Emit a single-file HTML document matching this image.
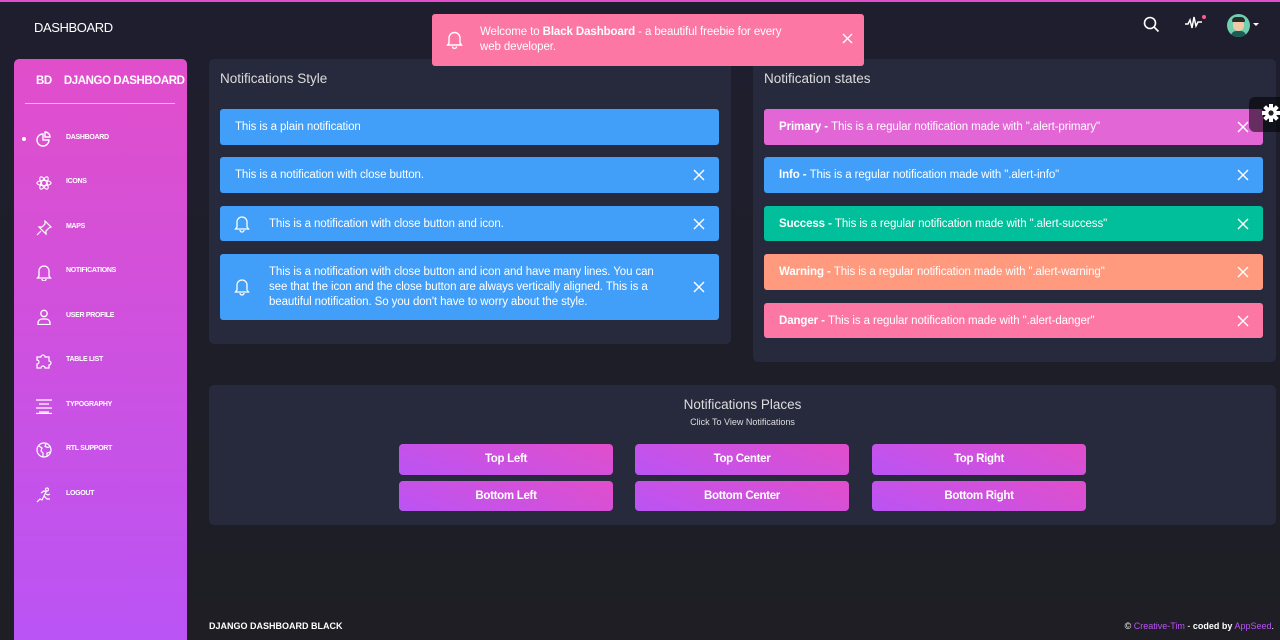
<!DOCTYPE html>
<html><head><meta charset="utf-8"><style>
*{box-sizing:border-box;margin:0;padding:0}
body{width:1280px;height:640px;overflow:hidden;background:linear-gradient(#1e1e2f,#1e1e24);font-family:"Liberation Sans",sans-serif;color:#fff;position:relative}
.topline{position:absolute;left:0;top:0;width:1280px;height:2px;background:#e14eca}
.abs{position:absolute}
.brand{left:34px;top:20px;font-size:13px;letter-spacing:-0.4px}
.side{left:14px;top:59px;width:173px;height:581px;border-radius:5px 5px 0 0;background:linear-gradient(180deg,#e14eca,#ba54f5)}
.side .logo{position:absolute;top:16px;left:22px;font-size:11.5px;font-weight:bold;letter-spacing:-0.4px;white-space:nowrap}
.side .logo span{margin-left:12px}
.side hr{position:absolute;top:44px;left:11px;width:150px;border:0;border-top:1px solid rgba(255,255,255,.6)}
.nav{position:absolute;left:22px;font-size:7px;font-weight:bold;letter-spacing:-0.3px;color:#fff}
.nav svg{position:absolute;left:0;top:-7px}
.nav b{position:absolute;left:30px;top:-4px;white-space:nowrap}
.card{background:#27293d;border-radius:5px}
.title{font-size:13.5px;color:#ddd;position:absolute;left:11px;top:12px}
.al{position:absolute;left:11px;width:499px;border-radius:3px;font-size:11.5px;color:#fff;display:flex;align-items:center;padding-left:15px;letter-spacing:-0.1px}
.al .x{position:absolute;right:14px;top:50%;margin-top:-6px}
.info{background:#419ef9}
.bell{position:absolute;left:14px;top:50%;margin-top:-9px}
.btn{position:absolute;width:214px;height:31px;border-radius:4px;background:linear-gradient(200deg,#e14eca,#ba54f5);font-size:11.5px;font-weight:bold;text-align:center;line-height:31px;letter-spacing:-0.3px}
</style></head><body>
<div class="topline"></div>
<div class="abs brand">DASHBOARD</div>

<svg class="abs" style="left:1143px;top:16px" width="17" height="17" viewBox="0 0 17 17" fill="none" stroke="#fff" stroke-width="1.6"><circle cx="7" cy="7" r="5.5"/><path d="M11 11l4.5 4.5"/></svg>
<svg class="abs" style="left:1185px;top:15px" width="20" height="15" viewBox="0 0 20 15" fill="none" stroke="#fff" stroke-width="1.5"><path d="M0 9h3l2-4 2 8 2-11 2 9 2-4h4"/></svg>
<div class="abs" style="left:1202px;top:15px;width:4px;height:4px;border-radius:50%;background:#fd5d93"></div>
<div class="abs" style="left:1227px;top:14px;width:23px;height:23px;border-radius:50%;background:#6fcfae;overflow:hidden"><div style="position:absolute;left:6px;top:5px;width:11px;height:12px;border-radius:5px;background:#f1c9a5"></div><div style="position:absolute;left:5px;top:3px;width:13px;height:5px;border-radius:4px 4px 1px 1px;background:#2b2b2b"></div><div style="position:absolute;left:4px;top:17px;width:15px;height:8px;border-radius:5px 5px 0 0;background:#1e5d55"></div></div>
<div class="abs" style="left:1253px;top:23px;border:3px solid transparent;border-top:3px solid #fff"></div>

<div class="abs" style="left:432px;top:14px;width:432px;height:52px;background:#fd77a4;border-radius:3px;z-index:5"></div>
<svg class="abs" style="left:446px;top:30px;z-index:6" width="17" height="19" viewBox="0 0 17 19" fill="none" stroke="#fff" stroke-width="1.4"><path d="M3 13V8a5.5 5.5 0 0111 0v5l1.5 2h-14z"/><path d="M6.5 16.5a2 2 0 004 0"/></svg>
<div class="abs" style="left:480px;top:25px;font-size:11.5px;line-height:15px;width:320px;z-index:6;letter-spacing:-0.1px">Welcome to <b>Black Dashboard</b> - a beautiful freebie for every web developer.</div>
<svg class="abs" style="left:842px;top:33px;z-index:6" width="11" height="11" viewBox="0 0 11 11" stroke="#fff" stroke-width="1.4"><path d="M1 1l9 9M10 1l-9 9"/></svg>

<div class="abs side">
<div class="logo">BD<span>DJANGO DASHBOARD</span></div>
<hr>
<div class="abs" style="left:8px;top:78px;width:4px;height:4px;border-radius:50%;background:#fff"></div>
<div class="nav" style="top:79px"><svg width="16" height="16" viewBox="0 0 16 16" fill="none" stroke="#fff" stroke-width="1.4"><path d="M7 3a6 6 0 106 6H7z"/><path d="M9 1v5h5a5 5 0 00-5-5z"/></svg><b>DASHBOARD</b></div>
<div class="nav" style="top:123px"><svg width="16" height="16" viewBox="0 0 16 16" fill="none" stroke="#fff" stroke-width="1.1"><ellipse cx="8" cy="8" rx="7" ry="2.6"/><ellipse cx="8" cy="8" rx="7" ry="2.6" transform="rotate(60 8 8)"/><ellipse cx="8" cy="8" rx="7" ry="2.6" transform="rotate(-60 8 8)"/></svg><b>ICONS</b></div>
<div class="nav" style="top:168px"><svg width="16" height="16" viewBox="0 0 16 16" fill="none" stroke="#fff" stroke-width="1.2"><path d="M9 1l6 6-2 1-3 3 0 3-7-7 3 0 3-3z"/><path d="M5 11l-4 4"/></svg><b>MAPS</b></div>
<div class="nav" style="top:212px"><svg width="16" height="17" viewBox="0 0 16 17" fill="none" stroke="#fff" stroke-width="1.3"><path d="M3 12V7a5 5 0 0110 0v5l1.5 2h-13z"/><path d="M6 15a2 2 0 004 0"/></svg><b>NOTIFICATIONS</b></div>
<div class="nav" style="top:257px"><svg width="16" height="16" viewBox="0 0 16 16" fill="none" stroke="#fff" stroke-width="1.3"><circle cx="8" cy="4.5" r="3.2"/><path d="M2 15.5v-1.5a4 4 0 014-4h4a4 4 0 014 4v1.5z"/></svg><b>USER PROFILE</b></div>
<div class="nav" style="top:301px"><svg width="17" height="16" viewBox="0 0 17 16" fill="none" stroke="#fff" stroke-width="1.2"><path d="M1 4h4a2 2 0 114 0h4v4a2 2 0 110 4v3H9a2 2 0 10-4 0H1v-4a2 2 0 100-4z"/></svg><b>TABLE LIST</b></div>
<div class="nav" style="top:346px"><svg width="16" height="16" viewBox="0 0 16 16" stroke="#fff" stroke-width="1.3"><path d="M0 2h16M3 6h10M0 10h16M3 14h10M0 15.5h16"/></svg><b>TYPOGRAPHY</b></div>
<div class="nav" style="top:390px"><svg width="16" height="16" viewBox="0 0 16 16" fill="none" stroke="#fff" stroke-width="1.2"><circle cx="8" cy="8" r="7"/><path d="M3 4l3 2-1 3 2 2v4M10 1.5l-1 3 3 1 2-1M11 14l0-3 3-1"/></svg><b>RTL SUPPORT</b></div>
<div class="nav" style="top:435px"><svg width="16" height="16" viewBox="0 0 16 16" fill="none" stroke="#fff" stroke-width="1.2"><circle cx="11" cy="2.5" r="1.5"/><path d="M1 15l3-3 2 1 2-4 3 3h3M5 6l3-2 2 1-2 4M10 7l2 1 2-1"/></svg><b>LOGOUT</b></div>
</div>

<div class="abs card" style="left:209px;top:59px;width:522px;height:285px">
<div class="title">Notifications Style</div>
<div class="al info" style="top:50px;height:36px">This is a plain notification</div>
<div class="al info" style="top:98px;height:36px">This is a notification with close button.<svg class="x" width="12" height="12" viewBox="0 0 12 12" stroke="#fff" stroke-width="1.4"><path d="M1 1l10 10M11 1l-10 10"/></svg></div>
<div class="al info" style="top:147px;height:35px;padding-left:49px"><svg class="bell" width="16" height="18" viewBox="0 0 16 18" fill="none" stroke="#fff" stroke-width="1.3"><path d="M3 12V7a5 5 0 0110 0v5l1.5 2h-13z"/><path d="M6 15a2 2 0 004 0"/></svg>This is a notification with close button and icon.<svg class="x" width="12" height="12" viewBox="0 0 12 12" stroke="#fff" stroke-width="1.4"><path d="M1 1l10 10M11 1l-10 10"/></svg></div>
<div class="al info" style="top:195px;height:66px;padding-left:49px;line-height:15px"><svg class="bell" width="16" height="18" viewBox="0 0 16 18" fill="none" stroke="#fff" stroke-width="1.3"><path d="M3 12V7a5 5 0 0110 0v5l1.5 2h-13z"/><path d="M6 15a2 2 0 004 0"/></svg><span style="width:390px">This is a notification with close button and icon and have many lines. You can see that the icon and the close button are always vertically aligned. This is a beautiful notification. So you don't have to worry about the style.</span><svg class="x" width="12" height="12" viewBox="0 0 12 12" stroke="#fff" stroke-width="1.4"><path d="M1 1l10 10M11 1l-10 10"/></svg></div>
</div>

<div class="abs card" style="left:753px;top:59px;width:523px;height:303px">
<div class="title">Notification states</div>
<div class="al" style="top:50px;height:36px;background:#e366d6"><b>Primary -&nbsp;</b>This is a regular notification made with ".alert-primary"<svg class="x" width="12" height="12" viewBox="0 0 12 12" stroke="#fff" stroke-width="1.4"><path d="M1 1l10 10M11 1l-10 10"/></svg></div>
<div class="al info" style="top:98px;height:36px"><b>Info -&nbsp;</b>This is a regular notification made with ".alert-info"<svg class="x" width="12" height="12" viewBox="0 0 12 12" stroke="#fff" stroke-width="1.4"><path d="M1 1l10 10M11 1l-10 10"/></svg></div>
<div class="al" style="top:147px;height:35px;background:#00bf9a"><b>Success -&nbsp;</b>This is a regular notification made with ".alert-success"<svg class="x" width="12" height="12" viewBox="0 0 12 12" stroke="#fff" stroke-width="1.4"><path d="M1 1l10 10M11 1l-10 10"/></svg></div>
<div class="al" style="top:195px;height:36px;background:#ff9a7f"><b>Warning -&nbsp;</b>This is a regular notification made with ".alert-warning"<svg class="x" width="12" height="12" viewBox="0 0 12 12" stroke="#fff" stroke-width="1.4"><path d="M1 1l10 10M11 1l-10 10"/></svg></div>
<div class="al" style="top:244px;height:35px;background:#fd77a4"><b>Danger -&nbsp;</b>This is a regular notification made with ".alert-danger"<svg class="x" width="12" height="12" viewBox="0 0 12 12" stroke="#fff" stroke-width="1.4"><path d="M1 1l10 10M11 1l-10 10"/></svg></div>
</div>

<div class="abs" style="left:1249px;top:97px;width:40px;height:35px;background:rgba(0,0,0,.55);border-radius:6px 0 0 6px"></div>
<svg class="abs" style="left:1262px;top:104px" width="18" height="18" viewBox="0 0 18 18"><g fill="#fff"><circle cx="9" cy="9" r="6"/><rect x="7" y="0" width="4" height="18"/><rect x="0" y="7" width="18" height="4"/><rect x="7" y="0" width="4" height="18" transform="rotate(45 9 9)"/><rect x="7" y="0" width="4" height="18" transform="rotate(-45 9 9)"/></g><circle cx="9" cy="9" r="2.6" fill="#1e1e24"/></svg>

<div class="abs card" style="left:209px;top:385px;width:1067px;height:140px">
<div style="position:absolute;top:12px;width:100%;text-align:center;font-size:13.5px;color:#ddd">Notifications Places</div>
<div style="position:absolute;top:32px;width:100%;text-align:center;font-size:9px;color:#ddd">Click To View Notifications</div>
<div class="btn" style="left:190px;top:59px">Top Left</div>
<div class="btn" style="left:426px;top:59px">Top Center</div>
<div class="btn" style="left:663px;top:59px">Top Right</div>
<div class="btn" style="left:190px;top:96px;height:30px;line-height:30px">Bottom Left</div>
<div class="btn" style="left:426px;top:96px;height:30px;line-height:30px">Bottom Center</div>
<div class="btn" style="left:663px;top:96px;height:30px;line-height:30px">Bottom Right</div>
</div>

<div class="abs" style="left:209px;top:621px;font-size:9px;font-weight:bold;color:#fff">DJANGO DASHBOARD BLACK</div>
<div class="abs" style="right:6px;top:621px;font-size:9px;color:#fff">© <span style="color:#ba54f5">Creative-Tim</span> - <b>coded by</b> <span style="color:#ba54f5">AppSeed</span>.</div>
</body></html>
